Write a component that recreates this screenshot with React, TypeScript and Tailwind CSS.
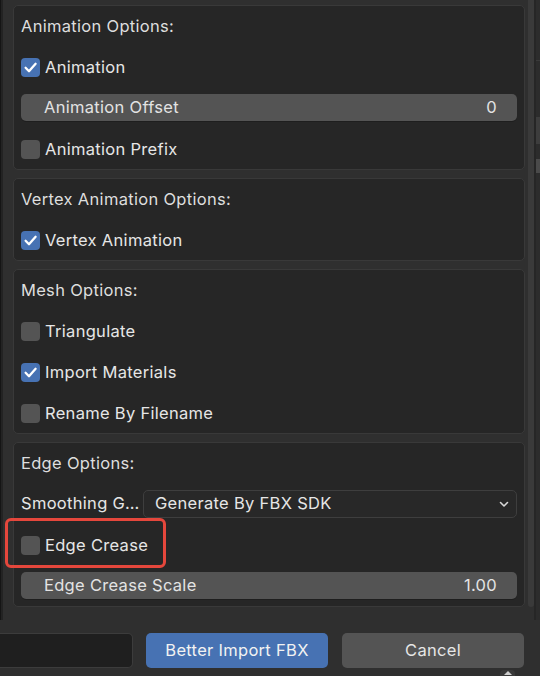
import React from "react";

const font = {
  fontFamily: "Inter, 'Noto Sans', 'DejaVu Sans', sans-serif",
  letterSpacing: "0.3px",
};

function Check({ checked }: { checked: boolean }) {
  return (
    <div
      className={
        "w-[19px] h-[19px] rounded-[4px] flex items-center justify-center shrink-0 " +
        (checked ? "bg-[#4772b3]" : "bg-[#545454]")
      }
    >
      {checked && (
        <svg width="19" height="19" viewBox="0 0 19 19">
          <polyline
            points="4.6,9.8 8,13.2 14.6,5.8"
            fill="none"
            stroke="#ffffff"
            strokeWidth="2.3"
            strokeLinecap="round"
            strokeLinejoin="round"
          />
        </svg>
      )}
    </div>
  );
}

function CheckRow({ label, checked }: { label: string; checked: boolean }) {
  return (
    <div className="h-[41px] flex items-center gap-[5px] pl-[7px] pt-[1px]">
      <Check checked={checked} />
      <span className="text-[16.5px] text-[#e6e6e6]">{label}</span>
    </div>
  );
}

function Title({ label }: { label: string }) {
  return (
    <div className="h-[40px] flex items-center pl-[7px] pt-[1px] text-[16.5px] text-[#dedede]">
      {label}
    </div>
  );
}

function NumberField({ label, value }: { label: string; value: string }) {
  return (
    <div className="h-[41px] flex items-center px-[7px]">
      <div className="w-full h-[27px] rounded-[5px] bg-[#545454] shadow-[0_1px_0_#1e1e1e] flex items-center justify-between pl-[23px] pr-[20px] text-[16.5px] text-[#e3e3e3]">
        <span>{label}</span>
        <span>{value}</span>
      </div>
    </div>
  );
}

function Panel({ children }: { children: React.ReactNode }) {
  return (
    <div className="border border-[#393939] rounded-[5px] bg-[#262626] flex flex-col">
      {children}
    </div>
  );
}

export default function App() {
  return (
    <div
      className="w-[540px] h-[676px] relative overflow-hidden bg-[#2f2f2f] flex flex-col"
      style={font}
    >
      <div className="h-[620px] flex flex-row shrink-0">
        <div className="w-[3px] h-full bg-[#232323] border-l border-[#151515]" />
        <div className="w-[10px]" />
        <div className="w-[512px] pt-[5px] flex flex-col gap-2">
          <Panel>
            <Title label="Animation Options:" />
            <CheckRow label="Animation" checked />
            <NumberField label="Animation Offset" value="0" />
            <CheckRow label="Animation Prefix" checked={false} />
          </Panel>
          <Panel>
            <Title label="Vertex Animation Options:" />
            <CheckRow label="Vertex Animation" checked />
          </Panel>
          <Panel>
            <Title label="Mesh Options:" />
            <CheckRow label="Triangulate" checked={false} />
            <CheckRow label="Import Materials" checked />
            <CheckRow label="Rename By Filename" checked={false} />
          </Panel>
          <Panel>
            <Title label="Edge Options:" />
            <div className="h-[41px] flex items-center pl-[7px] pr-[7px]">
              <span className="w-[122px] shrink-0 text-[16.5px] text-[#e6e6e6] whitespace-nowrap">
                Smoothing G…
              </span>
              <div className="flex-1 h-[28px] rounded-[5px] bg-[#282828] border border-[#3e3e3e] flex items-center justify-between pl-[11px] pr-[6px] text-[16.5px] text-[#e6e6e6]">
                <span>Generate By FBX SDK</span>
                <svg width="12" height="12" viewBox="0 0 12 12">
                  <polyline
                    points="2.5,4.5 6,8 9.5,4.5"
                    fill="none"
                    stroke="#d8d8d8"
                    strokeWidth="1.6"
                    strokeLinecap="round"
                    strokeLinejoin="round"
                  />
                </svg>
              </div>
            </div>
            <CheckRow label="Edge Crease" checked={false} />
            <NumberField label="Edge Crease Scale" value="1.00" />
          </Panel>
        </div>
        <div className="w-[3px]" />
        <div className="w-[6px] h-[607px] bg-[#3a3a3a] rounded-b-[3px]" />
        <div className="w-[2px] h-full bg-[#262626]" />
        <div className="w-[4px] h-full bg-[#2c2c2c] flex flex-col">
          <div className="h-[60px]" />
          <div className="h-[1px] bg-[#3a3a3a]" />
          <div className="h-[56px]" />
          <div className="h-[27px] bg-[#3d3d3d]" />
          <div className="h-[15px]" />
          <div className="h-[14px] bg-[#4a4a4a]" />
        </div>
      </div>
      <div className="h-[13px] shrink-0" />
      <div className="h-[35px] flex flex-row shrink-0">
        <div className="w-[133px] h-full bg-[#1f1f1f] border border-[#3c3c3c] border-l-0 rounded-r-[5px]" />
        <div className="w-[13px]" />
        <div className="w-[182px] h-full bg-[#4772b3] rounded-[5px] flex items-center justify-center text-[16.5px] text-[#f2f2f2]">
          Better Import FBX
        </div>
        <div className="w-[14px]" />
        <div className="w-[182px] h-full bg-[#545454] rounded-[5px] flex items-center justify-center text-[16.5px] text-[#e6e6e6]">
          Cancel
        </div>
      </div>
      <div className="absolute left-[500px] top-[670px] w-[15px] h-[10px] rounded-t-[4px] bg-[#3a3a3a] flex items-start justify-center">
        <div className="mt-[1px] w-0 h-0 border-l-[4px] border-r-[4px] border-b-[4px] border-l-transparent border-r-transparent border-b-[#cfcfcf]" />
      </div>
      <div className="absolute left-[5px] top-[518px] w-[161px] h-[50px] border-[3px] border-[#e5473c] rounded-[6px]" />
    </div>
  );
}
